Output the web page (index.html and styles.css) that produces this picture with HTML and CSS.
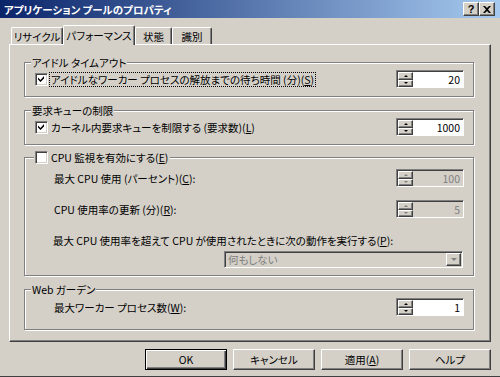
FILE: index.html
```html
<!DOCTYPE html>
<html lang="ja">
<head>
  <meta charset="UTF-8">
  <title>アプリケーション プールのプロパティ</title>
  <link rel="stylesheet" href="styles.css">
</head>
<body>
  <div class="dialog">
    <div class="titlebar">
      <span class="title">アプリケーション プールのプロパティ</span>
      <div class="caption-btns">
        <span class="cap-btn help">?</span>
        <span class="cap-btn">
          <svg width="8" height="7" viewBox="0 0 8 7"><path d="M0 0h2l2 2 2-2h2L5 3.5 8 7H6L4 5 2 7H0l3-3.5z" fill="#000"/></svg>
        </span>
      </div>
    </div>

    <div class="tabs">
      <div class="tab t1">リサイクル</div>
      <div class="tab t2 active">パフォーマンス</div>
      <div class="tab t3">状態</div>
      <div class="tab t4">識別</div>
    </div>

    <div class="panel">
      <fieldset class="group g-idle">
        <legend>アイドル タイムアウト</legend>
        <div class="row">
          <span class="check"><svg width="7" height="7" viewBox="0 0 7 7"><path d="M6 0v2.5L2.5 6 0 3.5V1.5L2.5 4z" fill="#000"/></svg></span>
          <span class="label focus">アイドルなワーカー プロセスの解放までの待ち時間 (分)(<u>S</u>)</span>
          <div class="spin">
            <div class="arrows"><span class="up"></span><span class="down"></span></div>
            <span class="value">20</span>
          </div>
        </div>
      </fieldset>

      <fieldset class="group g-queue">
        <legend>要求キューの制限</legend>
        <div class="row">
          <span class="check"><svg width="7" height="7" viewBox="0 0 7 7"><path d="M6 0v2.5L2.5 6 0 3.5V1.5L2.5 4z" fill="#000"/></svg></span>
          <span class="label">カーネル内要求キューを制限する (要求数)(<u>L</u>)</span>
          <div class="spin">
            <div class="arrows"><span class="up"></span><span class="down"></span></div>
            <span class="value">1000</span>
          </div>
        </div>
      </fieldset>

      <fieldset class="group g-cpu">
        <legend class="check-legend"><span class="check"></span><span>CPU 監視を有効にする(<u>E</u>)</span></legend>
        <div class="row">
          <span class="label indent">最大 CPU 使用 (パーセント)(<u>C</u>):</span>
          <div class="spin disabled">
            <div class="arrows"><span class="up"></span><span class="down"></span></div>
            <span class="value">100</span>
          </div>
        </div>
        <div class="row row-gap">
          <span class="label indent">CPU 使用率の更新 (分)(<u>R</u>):</span>
          <div class="spin disabled">
            <div class="arrows"><span class="up"></span><span class="down"></span></div>
            <span class="value">5</span>
          </div>
        </div>
        <div class="line indent">最大 CPU 使用率を超えて CPU が使用されたときに次の動作を実行する(<u>P</u>):</div>
        <div class="combo">
          <span class="combo-text">何もしない</span>
          <span class="combo-btn"></span>
        </div>
      </fieldset>

      <fieldset class="group g-web">
        <legend>Web ガーデン</legend>
        <div class="row">
          <span class="label indent">最大ワーカー プロセス数(<u>W</u>):</span>
          <div class="spin">
            <div class="arrows"><span class="up"></span><span class="down"></span></div>
            <span class="value">1</span>
          </div>
        </div>
      </fieldset>
    </div>

    <div class="buttons">
      <span class="btn default">OK</span>
      <span class="btn">キャンセル</span>
      <span class="btn">適用(<u>A</u>)</span>
      <span class="btn">ヘルプ</span>
    </div>
  </div>
</body>
</html>
```

FILE: styles.css
```css
* {
  box-sizing: border-box;
}
body {
  margin: 0;
  width: 500px;
  height: 377px;
  overflow: hidden;
  background: #d4d0c8;
  color: #000;
  font-family: "Noto Sans CJK JP", sans-serif;
  font-size: 10.5px;
  line-height: 13px;
  font-feature-settings: "palt";
}
u {
  text-decoration-thickness: 1px;
  text-underline-offset: 1px;
}
.dialog {
  height: 377px;
  border-bottom: 1px solid #404040;
}

/* title bar */
.titlebar {
  height: 18px;
  background: linear-gradient(to right, #0a246a, #a6caf0);
  display: flex;
  align-items: center;
  justify-content: space-between;
  padding: 0 5px 0 4px;
}
.title {
  color: #fff;
  font-weight: bold;
}
.caption-btns {
  display: flex;
}
.cap-btn {
  width: 16px;
  height: 14px;
  background: #d4d0c8;
  border: 1px solid;
  border-color: #fff #404040 #404040 #fff;
  box-shadow: inset -1px -1px #808080;
  display: flex;
  align-items: center;
  justify-content: center;
}
.cap-btn.help {
  font: bold 11px "Liberation Sans", sans-serif;
  line-height: 12px;
}

/* tabs */
.tabs {
  display: flex;
  align-items: flex-end;
  height: 19px;
  margin-top: 7px;
  padding-left: 11px;
  position: relative;
  z-index: 1;
}
.tab {
  height: 17px;
  border: 1px solid;
  border-bottom: none;
  border-color: #fff #404040 #404040 #fff;
  border-radius: 2px 2px 0 0;
  box-shadow: inset -1px 0 #808080;
  text-align: center;
  padding-top: 2px;
}
.tab.active {
  height: 20px;
  margin-bottom: -1px;
  background: #d4d0c8;
  padding-top: 3px;
}
.t1 { width: 52px; }
.t2 { width: 72px; }
.t3 { width: 37px; }
.t4 { width: 40px; }

/* page panel */
.panel {
  margin: 0 9px;
  height: 298px;
  border: 1px solid;
  border-color: #fff #404040 #404040 #fff;
  box-shadow: inset -1px -1px #808080;
  padding: 11px 0 0 14px;
}

/* group boxes (content starts below the legend) */
.group {
  width: 450px;
  margin: 0;
  min-width: 0;
  padding: 1px 9px 8px 10px;
  border: 1px solid #808080;
  box-shadow: 1px 1px 0 #fff, inset 1px 1px 0 #fff;
}
.group legend {
  padding: 0 1px;
  margin-left: -4px;
  background: #d4d0c8;
  line-height: 13px;
  height: 13px;
}
.g-queue { margin-top: 7px; }
.g-cpu {
  margin-top: 6px;
  padding-top: 5px;
  padding-bottom: 7px;
}
.g-web {
  margin-top: 7px;
  padding-top: 2px;
  padding-bottom: 13px;
}
.group .check-legend {
  display: flex;
  align-items: center;
  gap: 3px;
  margin-left: -1px;
  padding: 0 2px 0 1px;
}

/* rows */
.row {
  display: flex;
  align-items: center;
  height: 18px;
}
.row-gap {
  margin-top: 13px;
}
.label {
  margin-right: auto;
  padding: 0 1px;
}
.check + .label {
  margin-left: 2px;
}
.label.focus {
  outline: 1px dotted #000;
  outline-offset: 0;
}
.indent {
  margin-left: 18px;
}
.line {
  margin-top: 16px;
}

/* checkbox */
.check {
  width: 13px;
  height: 13px;
  flex: none;
  background: #fff;
  border: 1px solid;
  border-color: #808080 #fff #fff #808080;
  box-shadow: inset 1px 1px #404040, inset -1px -1px #d4d0c8;
  display: flex;
  align-items: center;
  justify-content: center;
}

/* spinner */
.spin {
  display: flex;
  width: 68px;
  height: 18px;
  border: 1px solid;
  border-color: #808080 #fff #fff #808080;
  box-shadow: inset 1px 1px #404040;
  padding: 1px 0 0 1px;
}
.arrows {
  width: 15px;
  display: flex;
  flex-direction: column;
}
.arrows span {
  flex: 1;
  background: #d4d0c8;
  border: 1px solid;
  border-color: #fff #404040 #404040 #fff;
  box-shadow: inset -1px -1px #808080;
  display: flex;
  align-items: center;
  justify-content: center;
}
.arrows span::after {
  content: "";
  border-left: 2px solid transparent;
  border-right: 2px solid transparent;
}
.arrows .up::after {
  border-bottom: 2px solid #000;
}
.arrows .down::after {
  border-top: 2px solid #000;
}
.value {
  flex: 1;
  background: #fff;
  text-align: right;
  padding-right: 3px;
  line-height: 15px;
}
.spin.disabled .value {
  background: #d4d0c8;
  color: #808080;
}
.spin.disabled .up::after {
  border-bottom-color: #808080;
}
.spin.disabled .down::after {
  border-top-color: #808080;
}

/* combo box */
.combo {
  display: flex;
  width: 239px;
  height: 17px;
  margin: 4px 1px 0 auto;
  border: 1px solid;
  border-color: #808080 #fff #fff #808080;
  box-shadow: inset 1px 1px #404040;
  padding: 1px;
}
.combo-text {
  flex: 1;
  color: #808080;
  padding-left: 2px;
  line-height: 13px;
}
.combo-btn {
  width: 15px;
  border: 1px solid;
  border-color: #fff #404040 #404040 #fff;
  box-shadow: inset -1px -1px #808080;
  display: flex;
  align-items: center;
  justify-content: center;
}
.combo-btn::after {
  content: "";
  border-left: 3px solid transparent;
  border-right: 3px solid transparent;
  border-top: 3px solid #808080;
}

/* dialog buttons */
.buttons {
  display: flex;
  justify-content: flex-end;
  gap: 6px;
  padding-right: 9px;
  margin-top: 7px;
}
.btn {
  width: 82px;
  height: 21px;
  border: 1px solid;
  border-color: #fff #404040 #404040 #fff;
  box-shadow: inset -1px -1px #808080;
  text-align: center;
  line-height: 19px;
}
.btn.default {
  border-color: #000;
  box-shadow: inset 1px 1px #fff, inset -1px -1px #404040, inset -2px -2px #808080;
}
```
